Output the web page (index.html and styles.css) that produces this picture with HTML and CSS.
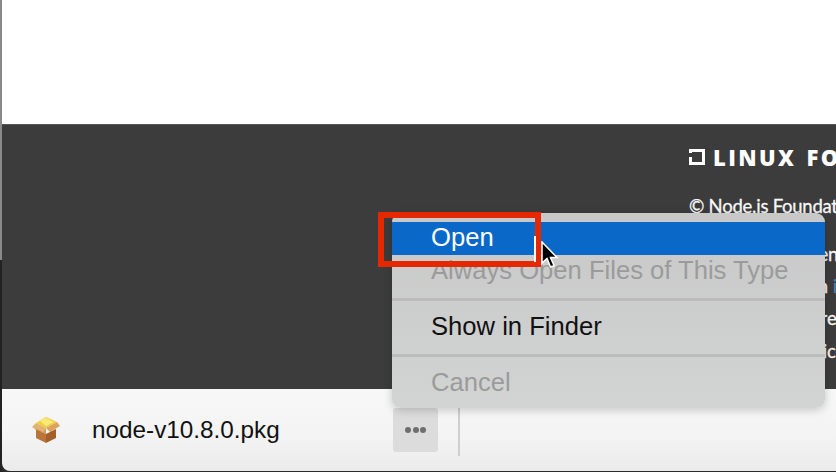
FILE: index.html
```html
<!DOCTYPE html>
<html lang="en">
<head>
    <meta charset="UTF-8">
    <meta name="viewport" content="width=device-width, initial-scale=1.0">
    <title>Download Node.js</title>
    <link rel="stylesheet" href="styles.css">
</head>
<body>
    <div class="window-edge"></div>
    <div class="page">
        <div class="page-top"></div>

        <footer class="footer">
            <div class="footer-col">
                <div class="linux-logo">
                    <svg class="linux-mark" viewBox="0 0 16 16" width="16" height="16">
                        <path d="M1.500 8V14.500H14.500V1.500H1.500V4" fill="none" stroke="#fff" stroke-width="3"/>
                        <rect x="0" y="4" width="3" height="4" fill="#3c3c3c"/>
                    </svg>
                    <span>LINUX FOUNDATION</span>
                </div>
                <p class="footer-line copyright">© Node.js Foundation. All Rights Reserved.</p>
                <p class="footer-line line-a">Portions and Joyent</p>
                <p class="footer-line line-b">Linux Foundation <a class="footer-link">is</a></p>
                <p class="footer-line line-c">Please read our related</p>
                <p class="footer-line line-d">Node.js website licenses</p>
            </div>
        </footer>

        <div class="download-bar">
            <svg class="pkg-icon" viewBox="0 0 30 28" width="30" height="28">
                <path d="M15 1 26 6 15 12 5 7Z" fill="#f0cf3c"/>
                <path d="M9 5 15 2 23 6 15 10Z" fill="#fbe97c"/>
                <path d="M1 11 5 7 15 12 11 17Z" fill="#e3b271"/>
                <path d="M29 10 26 6 15 12 19 16Z" fill="#dca35e"/>
                <path d="M5 13 15 18V27L5 22Z" fill="#b8743a"/>
                <path d="M25 13 15 18V27L25 22Z" fill="#a3602a"/>
                <path d="M1 11 11 17 15 12V18L5 14Z" fill="#d4975a"/>
            </svg>
            <span class="file-name">node-v10.8.0.pkg</span>
            <div class="more-button">
                <span class="dot"></span><span class="dot"></span><span class="dot"></span>
            </div>
            <div class="bar-divider"></div>
        </div>
    </div>

    <div class="context-menu">
        <div class="menu-item selected">Open</div>
        <div class="menu-item disabled">Always Open Files of This Type</div>
        <div class="menu-sep"></div>
        <div class="menu-item">Show in Finder</div>
        <div class="menu-sep"></div>
        <div class="menu-item disabled">Cancel</div>
    </div>

    <div class="red-box"></div>
    <div class="white-tick"></div>
    <svg class="cursor" viewBox="0 0 18 28" width="18" height="28">
        <path d="M1 1V22L6 17.500 9.500 26 13 24.500 9.500 16.500H16Z" fill="#000" stroke="#fff" stroke-width="1.500"/>
    </svg>
</body>
</html>
```

FILE: styles.css
```css
* {
    margin: 0;
    padding: 0;
    box-sizing: border-box;
}

body {
    width: 836px;
    height: 472px;
    display: flex;
    overflow: hidden;
    position: relative;
    background-color: #2b2b2b;
    font-family: 'Liberation Sans', Arial, sans-serif;
}

.window-edge {
    width: 2px;
    flex-shrink: 0;
    background: linear-gradient(#8a8a8a 0, #8a8a8a 260px, #222 260px);
}

.page {
    flex: 1;
    min-width: 0;
    display: flex;
    flex-direction: column;
}

.page-top {
    height: 124px;
    background-color: #ffffff;
}

.footer {
    height: 265px;
    overflow: hidden;
    padding-left: 687px;
    background-color: #3c3c3c;
    border-top: 1px solid #555;
    color: #f8f8f8;
    font-family: Lato, sans-serif;
}

.footer-col {
    width: 400px;
    padding-top: 21px;
}

.linux-logo {
    display: flex;
    align-items: center;
    gap: 8px;
    height: 22px;
    font-family: 'Open Sans', sans-serif;
    font-size: 22px;
    font-weight: 800;
    letter-spacing: 2.400px;
    word-spacing: 2px;
    color: #ffffff;
    white-space: nowrap;
}

.linux-mark {
    flex-shrink: 0;
}

.footer-line {
    font-size: 18.500px;
    line-height: 22px;
    font-weight: 400;
    letter-spacing: -0.250px;
    -webkit-text-stroke: 0.3px #f8f8f8;
    white-space: nowrap;
}

.copyright {
    margin-top: 27px;
}

.line-a {
    margin-top: 26px;
}

.line-b {
    margin-top: 10px;
    letter-spacing: -0.100px;
}

.line-c {
    margin-top: 10px;
    letter-spacing: 0.150px;
}

.line-d {
    margin-top: 11px;
}

.footer-link {
    color: #3f86c9;
    -webkit-text-stroke: 0;
}

.download-bar {
    flex: 1;
    display: flex;
    align-items: flex-start;
    background: linear-gradient(#f8f8f8, #f3f3f3 60%, #ebebeb);
    border-bottom-left-radius: 8px;
    margin-bottom: 1px;
}

.pkg-icon {
    margin: 27px 0 0 29px;
    flex-shrink: 0;
}

.file-name {
    margin: 28px 0 0 31px;
    width: 301px;
    font-size: 24.300px;
    line-height: 26px;
    color: #111;
}

.more-button {
    width: 45px;
    height: 44px;
    margin-top: 19px;
    display: flex;
    justify-content: center;
    align-items: center;
    gap: 1.500px;
    background-color: #dcdcdc;
    border-radius: 3px;
}

.dot {
    width: 6px;
    height: 6px;
    border-radius: 50%;
    background-color: #6e6e6e;
}

.bar-divider {
    width: 2px;
    height: 48px;
    margin: 19px 0 0 20px;
    background-color: #cfcfcf;
}

.context-menu {
    position: absolute;
    left: 392px;
    top: 213px;
    width: 433px;
    height: 195px;
    padding-top: 9px;
    background: linear-gradient(#c8c8c8, #d2d3d3);
    border-radius: 9px;
    box-shadow: 0 2px 10px rgba(0, 0, 0, 0.2);
    font-size: 25.600px;
    color: #111;
}

.menu-item {
    height: 33px;
    line-height: 31px;
    padding-left: 39px;
}

.menu-item.selected {
    background-color: #0a68c9;
    color: #ffffff;
}

.menu-item.disabled {
    color: #9b9b9b;
}

.menu-sep {
    height: 3px;
    margin: 10px 0;
    background-color: #bcbcbc;
}

.red-box {
    position: absolute;
    left: 378px;
    top: 212px;
    width: 163px;
    height: 55px;
    border: 6px solid #e52800;
}

.white-tick {
    position: absolute;
    left: 534px;
    top: 236px;
    width: 1.500px;
    height: 26px;
    background-color: #ffffff;
}

.cursor {
    position: absolute;
    left: 541px;
    top: 241px;
}
```
